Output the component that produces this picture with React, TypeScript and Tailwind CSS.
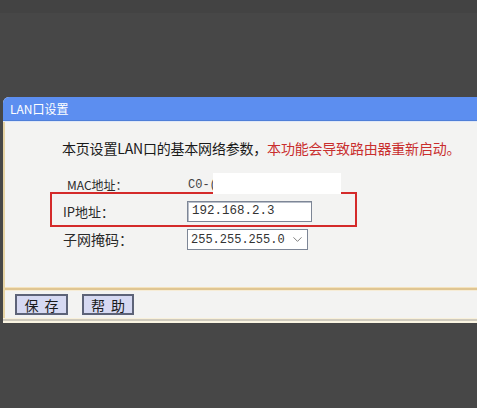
import { ChevronDown } from "lucide-react";

const cjk = { fontFamily: '"Noto Sans CJK SC", "Liberation Sans", sans-serif' };
const mono = { fontFamily: '"Liberation Mono", "Noto Sans CJK SC", monospace' };

export default function App() {
  return (
    <div className="w-[477px] h-[408px] bg-[#474747] overflow-hidden" style={cjk}>
      {/* top dark area */}
      <div className="h-[97px] border-t-[13px] border-[#434343]" />

      {/* panel */}
      <div className="ml-[3px] bg-[#f3f3f2] rounded-tl-[6px] overflow-hidden">
        {/* header */}
        <div className="h-[23px] bg-[#5c8ef0] flex items-center pl-[7px] text-white text-[12px] leading-none">
          LAN口设置
        </div>
        <div className="h-[1px] bg-[#4f7fd8]" />
        <div className="h-[1px] bg-[#dfe8f8]" />

        <div className="border-l-[2px] border-[#e6d3a4]">
          {/* content */}
          <div className="h-[165px] pt-[16px]">
            <p className="pl-[57px] text-[14px] leading-[20px] text-[#1a1a1a] whitespace-nowrap tracking-[-0.2px]">
              本页设置LAN口的基本网络参数，
              <span className="text-[#c92e2e]">本功能会导致路由器重新启动。</span>
            </p>

            {/* MAC row */}
            <div className="mt-[20px] h-[14px] flex items-center">
              <span className="ml-[62px] w-[121px] text-[12px] text-[#2a2a2a]">MAC地址：</span>
              <div className="flex items-center h-[20px]">
                <span className="text-[12px] text-[#444]" style={mono}>C0-(</span>
                <div className="w-[128px] h-[21px] bg-white -ml-[4px] mt-[-4px]" />
              </div>
            </div>

            {/* IP row highlighted */}
            <div className="ml-[45px] w-[307px] h-[35px] border-[2.5px] border-[#d42a2a] pt-[7px]">
              <div className="flex items-center h-[21px]">
                <span className="ml-[11px] w-[124px] text-[13px] text-[#2a2a2a]">IP地址：</span>
                <div className="w-[125px] h-[21px] border border-[#7d8696] bg-white flex items-center pl-[4px] shadow-[inset_1px_1px_0_#b9bfca]">
                  <span className="text-[12.5px] text-[#333]" style={mono}>192.168.2.3</span>
                </div>
              </div>
            </div>

            {/* subnet row */}
            <div className="mt-[2px] flex items-center h-[21px]">
              <span className="ml-[58px] w-[124px] text-[14px] text-[#2a2a2a]">子网掩码：</span>
              <div className="w-[121px] h-[21px] border border-[#7d8696] bg-white flex items-center pl-[3px]">
                <span className="text-[12px] text-[#333]" style={mono}>255.255.255.0</span>
                <ChevronDown className="ml-[4px] w-[17px] h-[15px] text-[#555]" strokeWidth={1.2} />
              </div>
            </div>
          </div>

          {/* separator */}
          <div className="h-[1px] bg-[#f4e2bc]" />
          <div className="h-[2px] bg-[#dfc592]" />
          <div className="h-[1px] bg-[#f6ecd6]" />

          {/* buttons */}
          <div className="h-[27px] flex items-start pt-[3px] gap-[14px] pl-[10px]">
            <button className="w-[53px] h-[21px] bg-[#d6d9f2] border-2 border-[#5d6378] text-[14px] leading-none text-[#1a1a1a] tracking-[6px] pl-[6px]">
              保存
            </button>
            <button className="w-[52px] h-[21px] bg-[#d6d9f2] border-2 border-[#5d6378] text-[14px] leading-none text-[#1a1a1a] tracking-[6px] pl-[6px]">
              帮助
            </button>
          </div>
        </div>
        <div className="h-[1px] bg-[#f8f0da]" />
        <div className="h-[2px] bg-[#cfcabd]" />
        <div className="h-[2px] bg-[#fbf5e2]" />
      </div>
    </div>
  );
}
